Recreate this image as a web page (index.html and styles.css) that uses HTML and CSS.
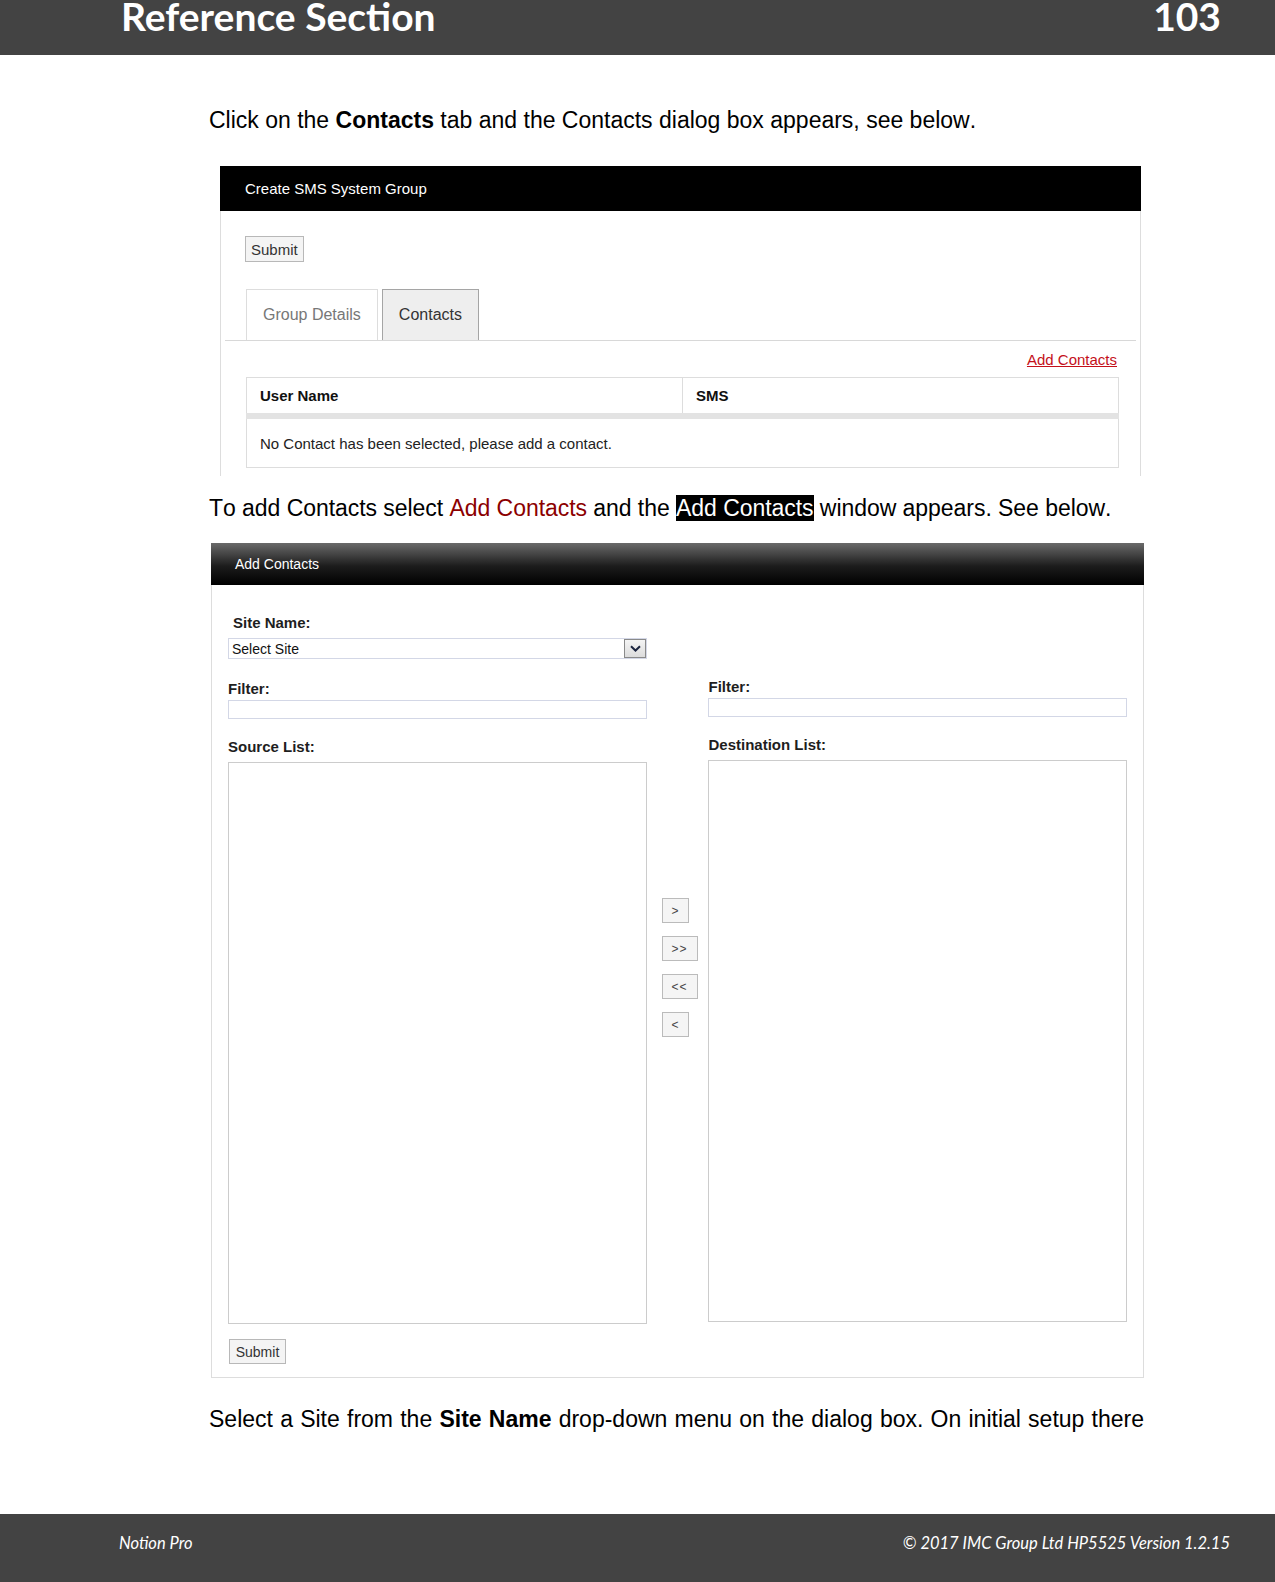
FILE: index.html
```html
<!DOCTYPE html>
<html lang="en">
<head>
    <meta charset="UTF-8">
    <title>Reference Section - 103</title>
    <link rel="stylesheet" href="styles.css">
</head>
<body>
<div class="page">

    <header class="page-head">
        <h1 class="page-title">Reference Section</h1>
        <span class="page-num">103</span>
    </header>

    <main class="page-body">
        <p class="text text-first">Click on the <b>Contacts</b> tab and the Contacts dialog box appears, see below.</p>

        <div class="shot shot-group">
            <div class="shot-head">Create SMS System Group</div>
            <div class="group-body">
                <button class="btn btn-submit">Submit</button>
                <div class="tabs">
                    <span class="tab">Group Details</span>
                    <span class="tab tab-active">Contacts</span>
                </div>
                <div class="add-link-row"><a class="add-link" href="#">Add Contacts</a></div>
                <table class="contacts-table">
                    <thead>
                        <tr><th class="col-user">User Name</th><th>SMS</th></tr>
                    </thead>
                    <tbody>
                        <tr><td colspan="2">No Contact has been selected, please add a contact.</td></tr>
                    </tbody>
                </table>
            </div>
        </div>

        <p class="text text-second">To add Contacts select <span class="red">Add Contacts</span> and the <span class="hl">Add Contacts</span> window appears. See below.</p>

        <div class="shot shot-add">
            <div class="add-head">Add Contacts</div>
            <div class="add-body">
                <label class="field-label site-label">Site Name:</label>
                <div class="site-select">
                    <span>Select Site</span>
                    <span class="select-btn">
                        <svg width="11" height="7" viewBox="0 0 11 7"><path d="M1 1.2 L5.5 5.5 L10 1.2" fill="none" stroke="#1c2540" stroke-width="2"/></svg>
                    </span>
                </div>

                <div class="lists">
                    <div class="list-col">
                        <label class="field-label">Filter:</label>
                        <div class="filter-input"></div>
                        <label class="field-label list-label">Source List:</label>
                        <div class="list-box"></div>
                    </div>
                    <div class="mover">
                        <button class="move-btn move-one">&gt;</button>
                        <button class="move-btn move-two">&gt;&gt;</button>
                        <button class="move-btn move-two">&lt;&lt;</button>
                        <button class="move-btn move-one">&lt;</button>
                    </div>
                    <div class="list-col list-col-right">
                        <label class="field-label">Filter:</label>
                        <div class="filter-input"></div>
                        <label class="field-label list-label">Destination List:</label>
                        <div class="list-box"></div>
                    </div>
                </div>

                <button class="btn btn-submit-small">Submit</button>
            </div>
        </div>

        <p class="text text-third">Select a Site from the <b>Site Name</b> drop-down menu on the dialog box. On initial setup there</p>
    </main>

    <footer class="page-foot">
        <span>Notion Pro</span>
        <span>© 2017 IMC Group Ltd HP5525 Version 1.2.15</span>
    </footer>

</div>
</body>
</html>
```

FILE: styles.css
```css
body {
    margin: 0;
    background: #fff;
    font-family: "Liberation Sans", Arial, sans-serif;
    color: #000;
}
.page {
    min-height: 1582px;
    display: flex;
    flex-direction: column;
}

/* page header / footer bars */
.page-head {
    height: 55px;
    background: #434343;
    color: #fff;
    display: flex;
    justify-content: space-between;
    align-items: flex-start;
    padding: 0 54px 0 121px;
    font-family: Lato, "Open Sans", sans-serif;
    font-weight: 700;
    font-size: 39px;
    line-height: 32px;
}
.page-title {
    margin: 0;
    font-size: inherit;
}
.page-foot {
    margin-top: auto;
    height: 68px;
    box-sizing: border-box;
    background: #434343;
    color: #fff;
    display: flex;
    justify-content: space-between;
    align-items: flex-start;
    padding: 19px 45px 0 119px;
    font-family: Lato, "Open Sans", sans-serif;
    font-style: italic;
    font-size: 16.5px;
    line-height: 20px;
}

/* body text */
.page-body {
    padding-left: 209px;
    width: 935px;
}
.text {
    margin: 0;
    font-size: 23px;
    line-height: 28px;
    font-kerning: none;
}
.text-first {
    margin-top: 51px;
}
.text-second {
    margin-top: 18px;
    letter-spacing: -0.05px;
}
.text-third {
    margin-top: 27px;
    text-align: justify;
    text-align-last: justify;
}
.red {
    color: #8b0000;
}
.hl {
    background: #000;
    color: #fff;
}

/* shared buttons */
.btn {
    display: block;
    font-family: "Liberation Sans", Arial, sans-serif;
    color: #333;
    background: #f4f4f4;
    border: 1px solid #b8b8b8;
    cursor: pointer;
}

/* screenshot 1: create group */
.shot-group {
    margin: 32px 0 0 11px;
    width: 921px;
}
.shot-head {
    height: 45px;
    background: #000;
    color: #fff;
    font-size: 15px;
    line-height: 45px;
    padding-left: 25px;
}
.group-body {
    border-left: 1px solid #ddd;
    border-right: 1px solid #ddd;
    padding: 25px 4px 8px;
}
.btn-submit {
    margin-left: 20px;
    height: 26px;
    padding: 0 5px;
    font-size: 15px;
}
.tabs {
    margin-top: 27px;
    display: flex;
    gap: 4px;
    padding-left: 21px;
    border-bottom: 1px solid #d8d8d8;
}
.tab {
    height: 50px;
    line-height: 50px;
    padding: 0 16px;
    border: 1px solid #ddd;
    border-bottom: none;
    font-size: 16px;
    color: #777;
}
.tab-active {
    background: #eee;
    border-color: #a5a5a5;
    color: #333;
}
.add-link-row {
    margin-top: 10px;
    padding-right: 19px;
    text-align: right;
    font-size: 15px;
    line-height: 17px;
}
.add-link {
    color: #c4101a;
}
.contacts-table {
    margin: 9px 0 0 21px;
    width: 873px;
    border-collapse: collapse;
    font-size: 15px;
}
.contacts-table th {
    height: 35px;
    padding: 0 13px;
    text-align: left;
    color: #111;
    border: 1px solid #ddd;
    border-bottom: 6px solid #e3e3e3;
}
.contacts-table .col-user {
    width: 50%;
}
.contacts-table td {
    height: 48px;
    padding: 0 13px;
    color: #222;
    border: 1px solid #ddd;
}

/* screenshot 2: add contacts */
.shot-add {
    margin: 21px 0 0 2px;
    width: 933px;
}
.add-head {
    height: 42px;
    background: linear-gradient(#6a6a6a, #1c1c1c 55%, #000);
    color: #fff;
    font-size: 14px;
    line-height: 42px;
    padding-left: 24px;
}
.add-body {
    border: 1px solid #ddd;
    border-top: none;
    padding: 29px 16px 13px;
}
.field-label {
    display: block;
    font-weight: bold;
    font-size: 15px;
    line-height: 17px;
    color: #1e1e1e;
}
.site-label {
    margin-left: 5px;
}
.site-select {
    margin-top: 7px;
    width: 419px;
    height: 21px;
    box-sizing: border-box;
    border: 1px solid #d3d7e6;
    display: flex;
    align-items: center;
    justify-content: space-between;
    padding-left: 3px;
    font-size: 14px;
    color: #111;
}
.select-btn {
    width: 22px;
    height: 19px;
    box-sizing: border-box;
    border: 1px solid #8a8a8a;
    background: linear-gradient(#f4f4f4, #dcdcdc);
    display: flex;
    align-items: center;
    justify-content: center;
}
.lists {
    margin-top: 21px;
    display: flex;
}
.list-col {
    width: 419px;
}
.list-col-right {
    margin-top: -2px;
}
.filter-input {
    margin-top: 3px;
    height: 19px;
    box-sizing: border-box;
    border: 1px solid #d3d7e6;
}
.list-label {
    margin-top: 19px;
}
.list-box {
    margin-top: 7px;
    height: 562px;
    box-sizing: border-box;
    border: 1px solid #ccc;
}
.mover {
    width: 62px;
    box-sizing: border-box;
    padding: 218px 0 0 15px;
    display: flex;
    flex-direction: column;
    align-items: flex-start;
    gap: 13px;
}
.move-btn {
    height: 25px;
    padding: 0;
    font-family: "Liberation Sans", Arial, sans-serif;
    font-size: 12px;
    color: #444;
    background: #f5f5f5;
    border: 1px solid #bbb;
    cursor: pointer;
}
.move-one {
    width: 27px;
}
.move-two {
    width: 36px;
    letter-spacing: 1px;
}
.btn-submit-small {
    margin: 15px 0 0 1px;
    width: 57px;
    height: 25px;
    padding: 0;
    font-size: 14px;
}
```
